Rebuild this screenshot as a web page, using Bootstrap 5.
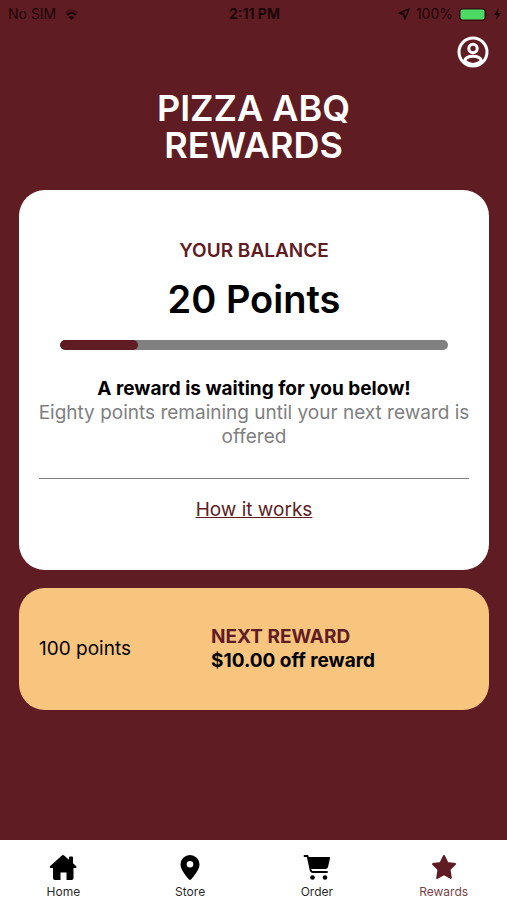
<!DOCTYPE html>
<html lang="en">
<head>
<meta charset="utf-8">
<meta name="viewport" content="width=device-width, initial-scale=1">
<title>Pizza ABQ Rewards</title>
<link rel="stylesheet" href="https://cdn.jsdelivr.net/npm/bootstrap@5.3.0/dist/css/bootstrap.min.css">
<style>
  :root { --wine: #601c23; --sand: #f8c57f; --grey: #808080; }
  body { font-family: Inter, "Liberation Sans", sans-serif; font-size: 19px; line-height: 24px; background: var(--wine); color: #000; }
  .wine { color: var(--wine); }
  .status { height: 28px; font-size: 14px; line-height: 28px; padding: 0 6px 0 8px; color: #1c0508; }
  .status > div { flex: 1 1 0; }
  .status-battery { gap: 6px; }
  .profile-bar { padding: 8px 18px 0; }
  .profile-bar svg { width: 32px; height: 32px; }
  .page-title { font-size: 36px; line-height: 37px; margin: 22px 0 26px; }
  .panel { border-radius: 26px; margin: 0 18px 18px 19px; }
  .balance { padding: 49px 16px 48px; }
  .balance-label { font-size: 19px; line-height: 24px; }
  .points { font-size: 38px; line-height: 48px; margin: 12px 0 17px; }
  .meter { height: 10px; border-radius: 5px; background: var(--grey); margin: 0 25px 27px; }
  .meter .progress-bar { border-radius: 5px; background: var(--wine); }
  .muted-note { color: var(--grey); }
  .rule { border-color: var(--grey); opacity: 1; margin: 29px 4px 19px; }
  .next { background: var(--sand); padding: 37px 20px; }
  .next-cost { width: 40%; }
  .tabs { height: 60px; }
  .tabs a { color: #000; font-size: 12px; line-height: 16px; padding-top: 14px; gap: 4px; }
  .tabs a span { opacity: .85; }
  .tabs a.active { color: var(--wine); }
  .tabs svg { width: 28px; height: 26px; }
</style>
<script src="https://cdn.jsdelivr.net/npm/bootstrap@5.3.0/dist/js/bootstrap.bundle.min.js" defer></script>
</head>
<body class="min-vh-100 d-flex flex-column">
<header>
  <div class="status d-flex align-items-center">
    <div class="d-flex align-items-center gap-2">
      <span>No SIM</span>
      <svg width="15" height="11" viewBox="0 0 14 11" fill="none" stroke="currentColor" stroke-width="2" aria-hidden="true"><path d="M1 4Q7-1.500 13 4" opacity=".4"/><path d="M2.500 6Q7 2 11.500 6"/><path d="M4 8.200Q7 5.800 10 8.200L7 11Z" fill="currentColor" stroke="none"/></svg>
    </div>
    <div class="text-center fw-bold">2:11 PM</div>
    <div class="status-battery d-flex align-items-center justify-content-end">
      <svg width="12" height="12" viewBox="0 0 12 12" fill="none" stroke="currentColor" stroke-width="1.700" stroke-linejoin="round" aria-hidden="true"><path d="M11 1 6.800 11 5.800 6.200 1 5.200Z"/></svg>
      <span>100%</span>
      <svg width="29" height="13" viewBox="0 0 29 13" aria-hidden="true"><rect x=".5" y=".5" width="26" height="12" rx="3" fill="#3b0f14" stroke="#3b0f14"/><rect x="1.500" y="1.500" width="24" height="10" rx="2" fill="#4cd964"/><path d="M27.500 4.500Q29 6.500 27.500 8.500Z" fill="#3b0f14"/></svg>
      <svg width="7" height="12" viewBox="0 0 7 12" fill="currentColor" aria-hidden="true"><path d="M4.500 0 0 7H3L2 12 7 5H4Z"/></svg>
    </div>
  </div>
  <div class="profile-bar d-flex justify-content-end">
    <button type="button" class="btn p-0 border-0 d-flex text-white" aria-label="Profile">
      <svg viewBox="0 0 32 32" fill="none" stroke="currentColor" stroke-width="3" aria-hidden="true"><circle cx="16" cy="16" r="14"/><circle cx="16" cy="12.500" r="4.200"/><path d="M7.500 25C9 18.800 23 18.800 24.500 25"/><path d="M7.500 25Q16 32 24.500 25"/></svg>
    </button>
  </div>
  <h1 class="page-title text-white text-center fw-semibold">PIZZA ABQ<br>REWARDS</h1>
</header>
<main class="flex-grow-1">
  <section class="panel balance bg-white text-center">
    <h2 class="balance-label wine fw-semibold m-0">YOUR BALANCE</h2>
    <p class="points fw-semibold">20 Points</p>
    <div class="progress meter" role="progressbar" aria-label="Points toward next reward" aria-valuenow="20" aria-valuemin="0" aria-valuemax="100"><div class="progress-bar" style="width:20%"></div></div>
    <p class="fw-bold m-0">A reward is waiting for you below!</p>
    <p class="muted-note m-0">Eighty points remaining until your next reward is offered</p>
    <hr class="rule">
    <a href="#how" class="wine">How it works</a>
  </section>
  <section class="panel next d-flex align-items-center">
    <div class="next-cost">100 points</div>
    <div class="flex-fill fw-bold">
      <div class="wine">NEXT REWARD</div>
      <div>$10.00 off reward</div>
    </div>
  </section>
</main>
<nav class="tabs bg-white d-flex sticky-bottom" aria-label="Main">
  <a href="#home" class="flex-fill w-25 d-flex flex-column align-items-center text-decoration-none">
    <svg viewBox="0 0 28 26" fill="currentColor" aria-hidden="true"><path d="M12.600 1.700Q14 .5 15.400 1.700L20 5.700V3.500Q20 2.500 21 2.500H23Q24 2.500 24 3.500V9.200L27 11.900Q28 13 27 14H24.500V24Q24.500 26 22.500 26H17.500V18.500H11.500V26H6Q4 26 4 24V14H1.500Q0 13 1.200 11.900Z"/></svg><span>Home</span></a>
  <a href="#store" class="flex-fill w-25 d-flex flex-column align-items-center text-decoration-none">
    <svg viewBox="0 0 28 26" fill="currentColor" aria-hidden="true"><path fill-rule="evenodd" d="M14 1A9.500 9.500 0 0 1 23.500 10.500C23.500 15.500 18 22 15 25.500Q14 26.400 13 25.500C10 22 4.500 15.500 4.500 10.500A9.500 9.500 0 0 1 14 1ZM14 7A3.300 3.300 0 1 0 14 13.600A3.300 3.300 0 0 0 14 7Z"/></svg><span>Store</span></a>
  <a href="#order" class="flex-fill w-25 d-flex flex-column align-items-center text-decoration-none">
    <svg viewBox="0 0 28 26" fill="currentColor" aria-hidden="true"><path d="M5 3H26Q27.300 3 27 4.300L25 13Q24.500 15 22.500 15H7Z"/><path d="M1.500 2H4.600L7.600 16Q8 18 10 18H24" fill="none" stroke="currentColor" stroke-width="1.800" stroke-linecap="round" stroke-linejoin="round"/><circle cx="9.500" cy="23.500" r="2.300"/><circle cx="22" cy="23.500" r="2.300"/></svg><span>Order</span></a>
  <a href="#rewards" class="active flex-fill w-25 d-flex flex-column align-items-center text-decoration-none" aria-current="page">
    <svg viewBox="0 0 28 26" fill="currentColor" stroke="currentColor" stroke-width="2" stroke-linejoin="round" aria-hidden="true"><path d="M14 2 17.400 9 25 10.100 19.500 15.500 20.800 24 14 20.200 7.200 24 8.500 15.500 3 10.100 10.600 9Z"/></svg><span>Rewards</span></a>
</nav>
</body>
</html>
